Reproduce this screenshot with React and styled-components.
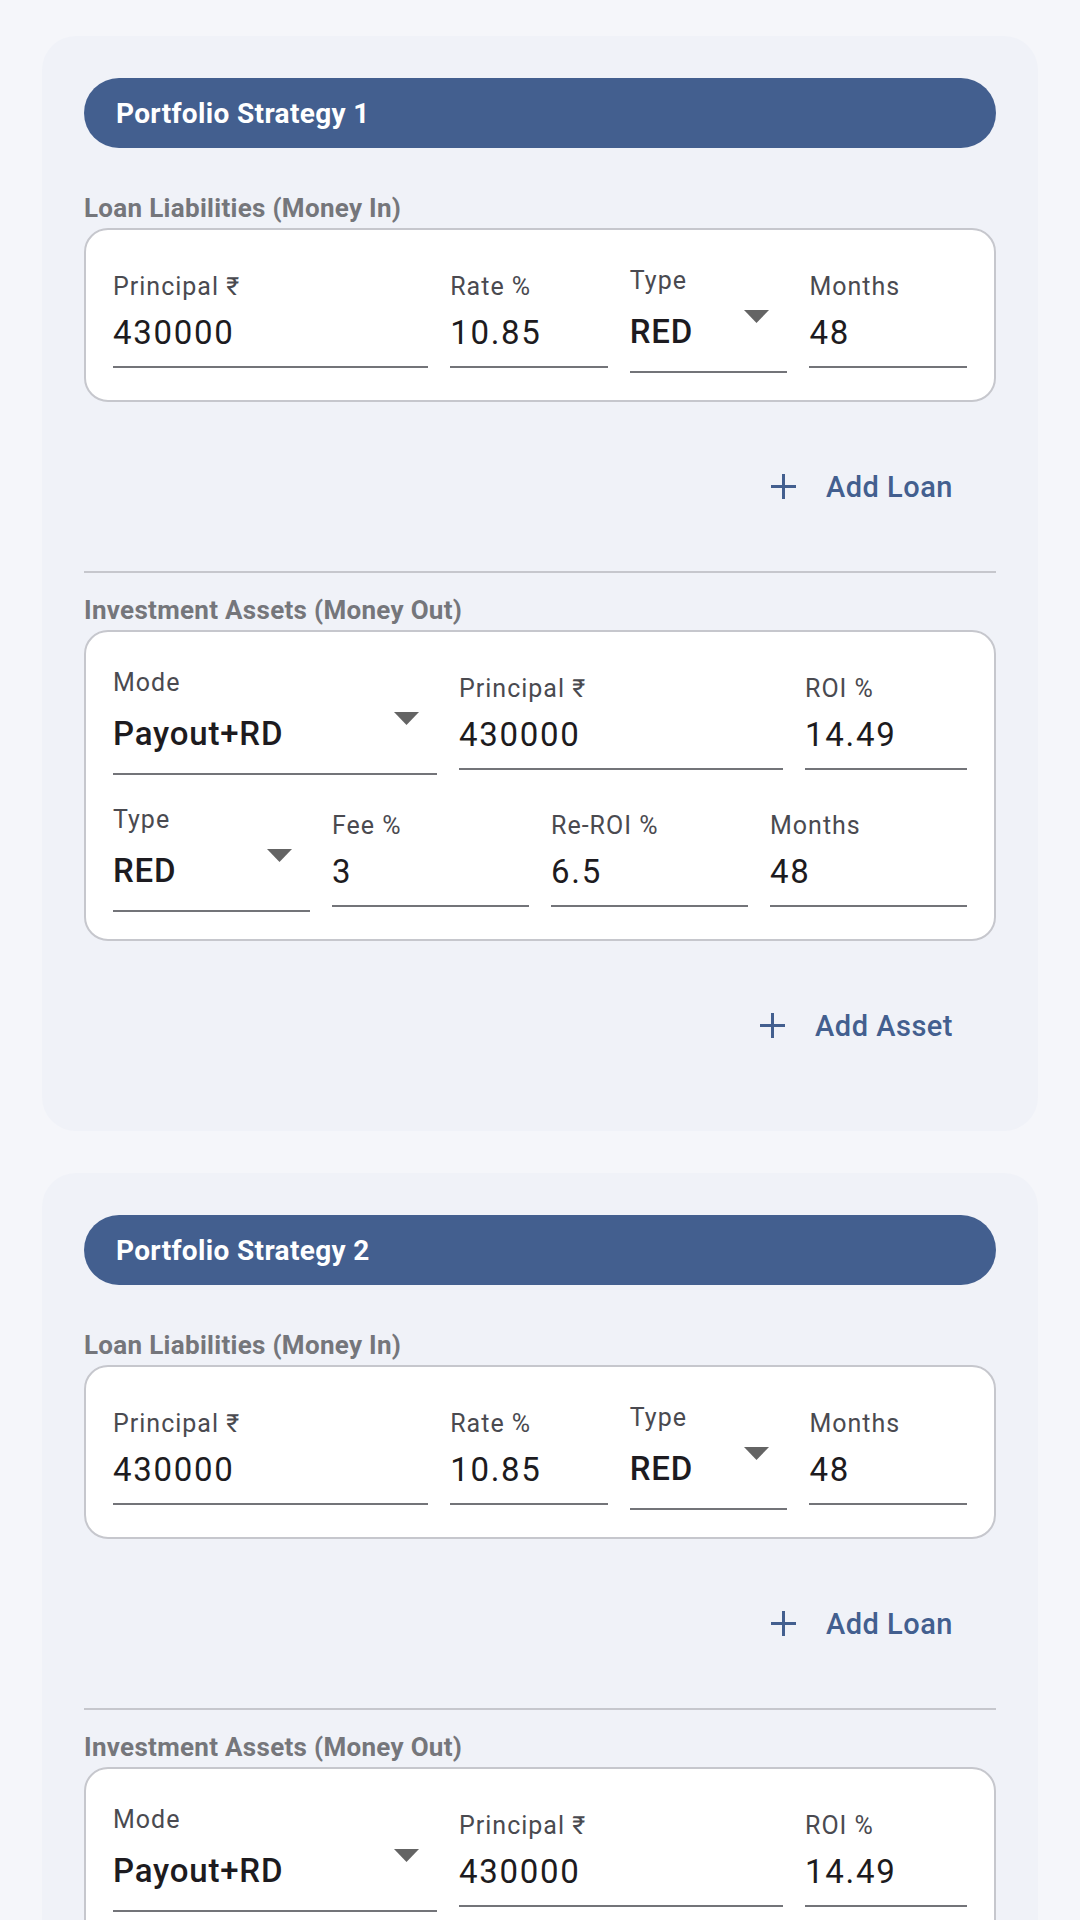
import React from "react";
import styled, { createGlobalStyle } from "styled-components";

const GlobalStyle = createGlobalStyle`
  html, body {
    margin: 0;
    padding: 0;
    background: #f5f6fa;
  }
  body {
    font-family: Roboto, "Noto Sans", "Liberation Sans", sans-serif;
    -webkit-font-smoothing: antialiased;
  }
  *, *::before, *::after {
    box-sizing: border-box;
  }
`;

const Page = styled.main`
  display: flex;
  flex-direction: column;
  gap: 42px;
  padding: 36px 42px 60px;
  background: #f5f6fa;
`;

const Card = styled.section`
  display: flex;
  flex-direction: column;
  background: #f0f2f8;
  border-radius: 34px;
  padding: 42px 42px 21px;
`;

const HeaderPill = styled.h2`
  margin: 0;
  height: 70px;
  border-radius: 35px;
  background: #435f8f;
  color: #ffffff;
  font-size: 28px;
  font-weight: 700;
  letter-spacing: 0.35px;
  display: flex;
  align-items: center;
  padding-left: 32px;
`;

const SectionTitle = styled.h3`
  margin: ${(p) => p.$top}px 0 0;
  font-size: 26px;
  line-height: 30px;
  font-weight: 700;
  color: #75767b;
  letter-spacing: 0.3px;
`;

const FieldBox = styled.div`
  margin-top: 5px;
  background: #ffffff;
  border: 2px solid #c6c7cd;
  border-radius: 24px;
  padding: 36px 27px 27px;
  display: flex;
  flex-direction: column;
  gap: 30px;
`;

const FieldRow = styled.div`
  display: flex;
  align-items: center;
  gap: 22px;
`;

const Field = styled.div`
  flex: ${(p) => p.$grow} 1 0;
  min-width: 0;
  display: flex;
  flex-direction: column;
`;

const Label = styled.div`
  font-size: 25px;
  line-height: 30px;
  color: #4a4a50;
  letter-spacing: 1px;
  white-space: nowrap;
`;

const ValueLine = styled.div`
  margin-top: ${(p) => (p.$select ? 16 : 11)}px;
  padding-bottom: ${(p) => (p.$select ? 19 : 13)}px;
  border-bottom: 2px solid #737479;
  display: flex;
  justify-content: space-between;
  align-items: flex-start;
`;

const Value = styled.span`
  font-size: 33px;
  line-height: 40px;
  color: #1d1b20;
  font-weight: ${(p) => (p.$select ? 500 : 400)};
  letter-spacing: ${(p) => (p.$select ? 0.8 : 1.7)}px;
  white-space: nowrap;
`;

const Arrow = styled.svg`
  flex: none;
  width: 25px;
  height: 13px;
  margin-top: -2px;
  margin-right: 18px;
  fill: #646464;
`;

const ButtonRow = styled.div`
  height: 169px;
  display: flex;
  justify-content: flex-end;
  align-items: center;
  padding-right: 43px;
`;

const AddButton = styled.button`
  display: flex;
  align-items: center;
  gap: 30px;
  border: none;
  background: transparent;
  padding: 0;
  color: #435f8f;
  font-family: inherit;
  font-size: 29px;
  font-weight: 500;
  letter-spacing: 0.5px;
  cursor: pointer;
`;

const PlusIcon = styled.svg`
  width: 25px;
  height: 25px;
  stroke: #435f8f;
  stroke-width: 3;
  fill: none;
`;

const Divider = styled.hr`
  margin: 0;
  border: none;
  height: 2px;
  background: #c6c7cd;
`;

const DropArrow = () => (
  <Arrow viewBox="0 0 25 13" aria-hidden="true">
    <polygon points="0,0 25,0 12.5,13" />
  </Arrow>
);

const Plus = () => (
  <PlusIcon viewBox="0 0 25 25" aria-hidden="true">
    <path d="M12.5 0 V25 M0 12.5 H25" />
  </PlusIcon>
);

const FormField = ({ label, value, grow = 1, select = false }) => (
  <Field $grow={grow}>
    <Label>{label}</Label>
    <ValueLine $select={select}>
      <Value $select={select}>{value}</Value>
      {select && <DropArrow />}
    </ValueLine>
  </Field>
);

const loanRow = [
  { label: "Principal ₹", value: "430000", grow: 2 },
  { label: "Rate %", value: "10.85" },
  { label: "Type", value: "RED", select: true },
  { label: "Months", value: "48" },
];

const assetRows = [
  [
    { label: "Mode", value: "Payout+RD", grow: 2, select: true },
    { label: "Principal ₹", value: "430000", grow: 2 },
    { label: "ROI %", value: "14.49" },
  ],
  [
    { label: "Type", value: "RED", select: true },
    { label: "Fee %", value: "3" },
    { label: "Re-ROI %", value: "6.5" },
    { label: "Months", value: "48" },
  ],
];

const Row = ({ fields }) => (
  <FieldRow>
    {fields.map((f) => (
      <FormField key={f.label} {...f} />
    ))}
  </FieldRow>
);

const Strategy = ({ index }) => (
  <Card>
    <HeaderPill>Portfolio Strategy {index}</HeaderPill>
    <SectionTitle $top={45}>Loan Liabilities (Money In)</SectionTitle>
    <FieldBox>
      <Row fields={loanRow} />
    </FieldBox>
    <ButtonRow>
      <AddButton>
        <Plus />
        Add Loan
      </AddButton>
    </ButtonRow>
    <Divider />
    <SectionTitle $top={22}>Investment Assets (Money Out)</SectionTitle>
    <FieldBox>
      {assetRows.map((r, i) => (
        <Row key={i} fields={r} />
      ))}
    </FieldBox>
    <ButtonRow>
      <AddButton>
        <Plus />
        Add Asset
      </AddButton>
    </ButtonRow>
  </Card>
);

export default function App() {
  return (
    <>
      <GlobalStyle />
      <Page>
        <Strategy index={1} />
        <Strategy index={2} />
      </Page>
    </>
  );
}
